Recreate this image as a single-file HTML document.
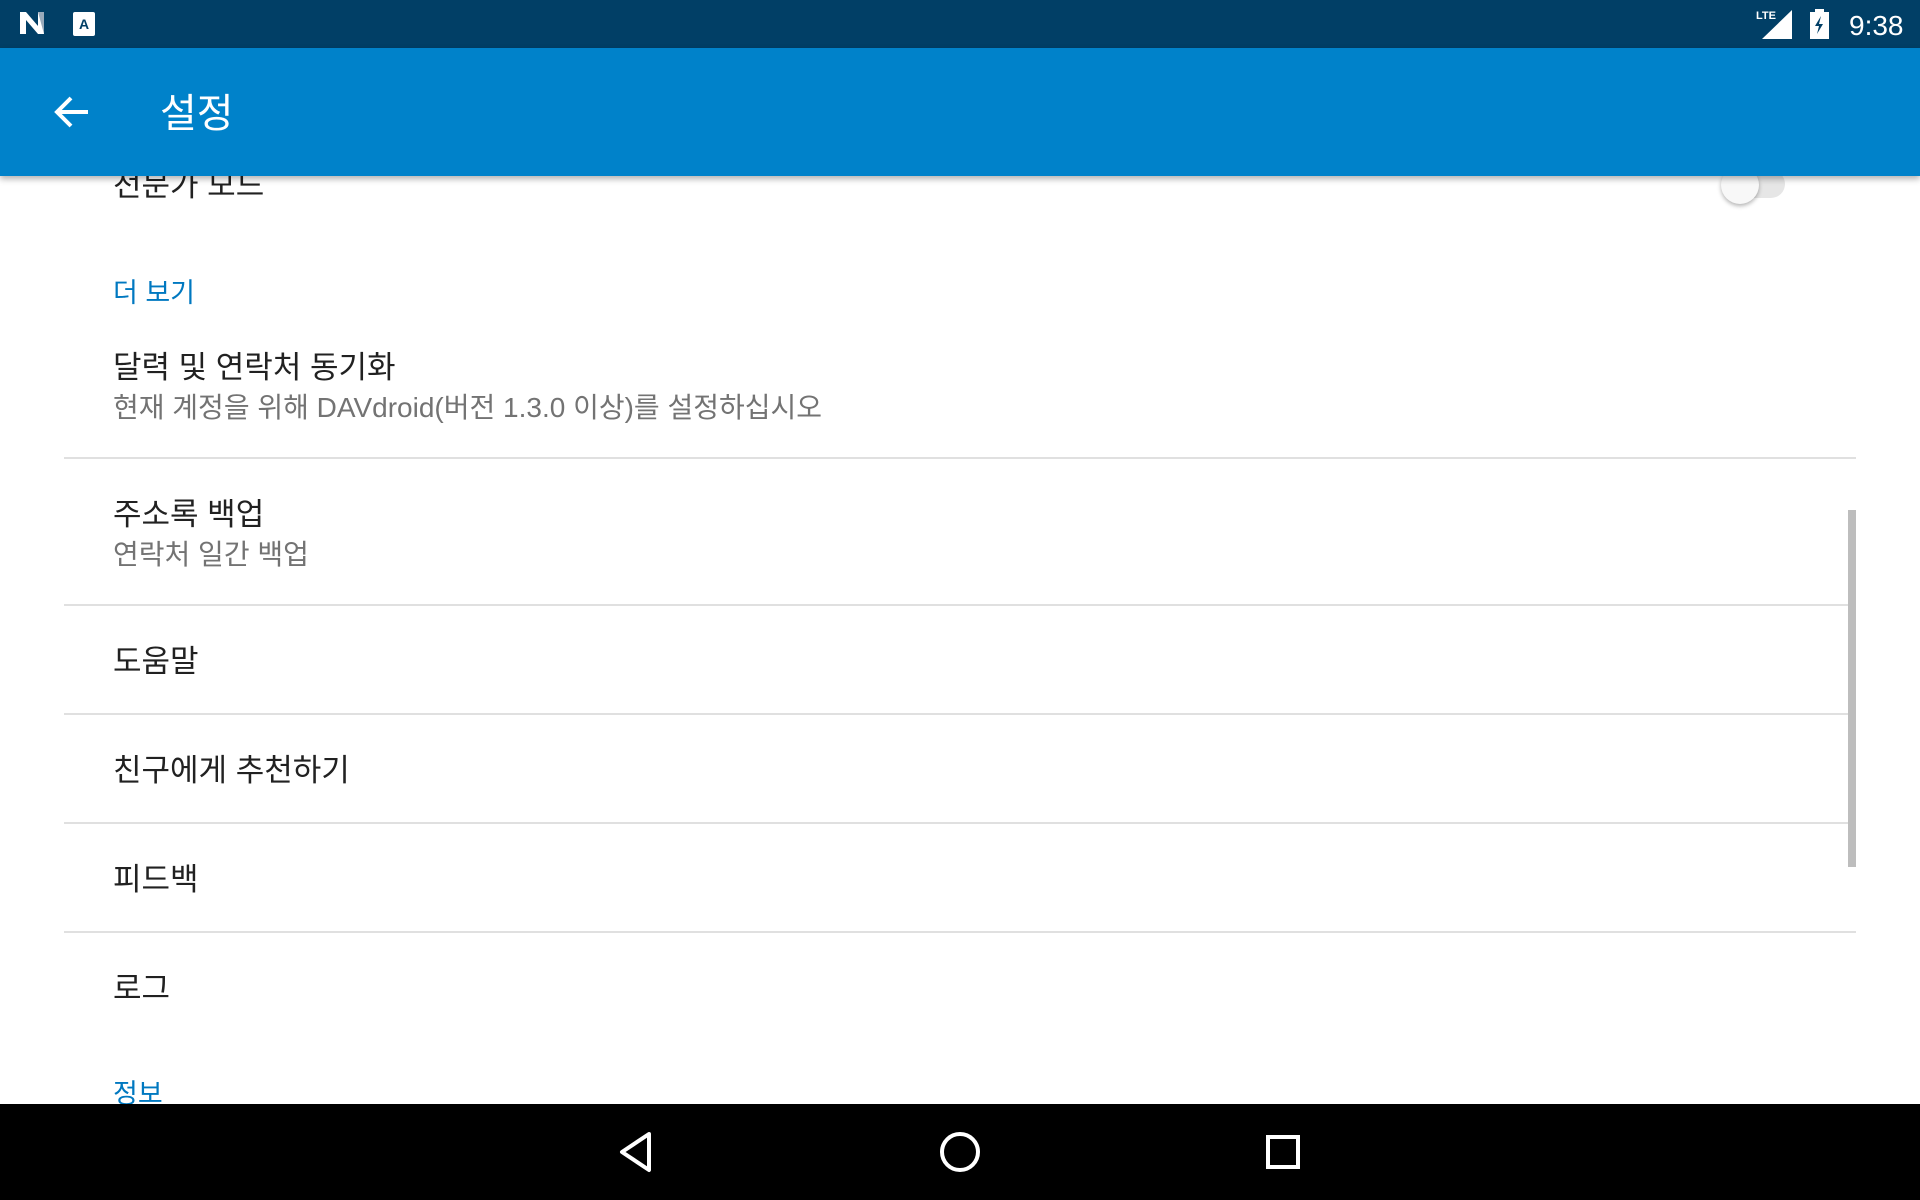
<!DOCTYPE html>
<html><head><meta charset="utf-8"><style>
*{margin:0;padding:0;box-sizing:border-box}
body{width:1920px;height:1200px;position:relative;overflow:hidden;background:#fff;font-family:"Liberation Sans","Noto Sans CJK KR",sans-serif}
.a{position:absolute;white-space:nowrap}
.t{font-size:31px;color:#212121;left:113px;line-height:1}
.s{font-size:28px;color:#737373;left:113px;line-height:1}
.c{font-size:27px;color:#0078c0;left:113px;line-height:1}
.d{position:absolute;left:64px;width:1792px;height:2px;background:#e0e0e0}
</style></head><body>
<div class="a t" style="top:170px">전문가 모드</div>
<div class="a" style="left:1725px;top:170px;width:60px;height:28px;border-radius:14px;background:#e6e6e6"></div>
<div class="a" style="left:1721px;top:166px;width:38px;height:38px;border-radius:50%;background:#f8f8f8;box-shadow:0 2px 4px rgba(0,0,0,.3)"></div>
<div class="a" style="left:0;top:0;width:1920px;height:48px;background:#013f66"></div>
<svg class="a" style="left:20px;top:12px" width="30" height="22" viewBox="0 0 30 22"><path d="M0 0h6l12 14V0h6v22h-6L6 8v14H0z" fill="#fff"/><path d="M18 0h6v22z" fill="#9ab"/></svg>
<svg class="a" style="left:73px;top:12px" width="22" height="24" viewBox="0 0 22 24"><rect width="22" height="24" rx="2" fill="#fff"/><text x="11" y="17" font-size="14" font-weight="bold" text-anchor="middle" fill="#013f66" font-family="Liberation Sans">A</text></svg>
<div class="a" style="left:1756px;top:10px;font-size:11px;color:#fff;font-weight:bold">LTE</div>
<svg class="a" style="left:1762px;top:10px" width="30" height="29"><path d="M30 0V29H0z" fill="#fff"/></svg>
<svg class="a" style="left:1810px;top:9px" width="19" height="30" viewBox="0 0 19 30"><rect x="5" y="0" width="9" height="3" fill="#fff"/><rect x="0" y="3" width="19" height="27" fill="#fff"/><path d="M11 7l-6 10h4l-2 8 6-10h-4z" fill="#013f66"/></svg>
<div class="a" style="left:1849px;top:10px;font-size:28px;color:#fff">9:38</div>
<div class="a" style="left:0;top:48px;width:1920px;height:128px;background:#0082ca;box-shadow:0 3px 6px rgba(0,0,0,.3)"></div>
<svg class="a" style="left:54px;top:95px" width="36" height="34" viewBox="0 0 36 34"><path d="M34 17H4M17 3L3 17l14 14" stroke="#fff" stroke-width="4" fill="none"/></svg>
<div class="a" style="left:160px;top:94px;font-size:40px;color:#fff;line-height:1">설정</div>
<div class="a c" style="top:280px">더 보기</div>
<div class="a t" style="top:352px">달력 및 연락처 동기화</div>
<div class="a s" style="top:394px">현재 계정을 위해 DAVdroid(버전 1.3.0 이상)를 설정하십시오</div>
<div class="d" style="top:457px"></div>
<div class="a t" style="top:499px">주소록 백업</div>
<div class="a s" style="top:541px">연락처 일간 백업</div>
<div class="d" style="top:604px"></div>
<div class="a t" style="top:646px">도움말</div>
<div class="d" style="top:713px"></div>
<div class="a t" style="top:755px">친구에게 추천하기</div>
<div class="d" style="top:822px"></div>
<div class="a t" style="top:864px">피드백</div>
<div class="d" style="top:931px"></div>
<div class="a t" style="top:973px">로그</div>
<div class="a c" style="top:1081px">정보</div>
<div class="a" style="left:1848px;top:510px;width:8px;height:357px;background:#bdbdbd"></div>
<div class="a" style="left:0;top:1104px;width:1920px;height:96px;background:#000"></div>
<svg class="a" style="left:616px;top:1130px" width="40" height="44" viewBox="0 0 40 44"><path d="M33 4L6 22l27 18z" stroke="#fff" stroke-width="4" fill="none" stroke-linejoin="round"/></svg>
<svg class="a" style="left:938px;top:1130px" width="44" height="44"><circle cx="22" cy="22" r="18" stroke="#fff" stroke-width="4" fill="none"/></svg>
<svg class="a" style="left:1266px;top:1135px" width="34" height="34"><rect x="2" y="2" width="30" height="30" stroke="#fff" stroke-width="4" fill="none"/></svg>
</body></html>
